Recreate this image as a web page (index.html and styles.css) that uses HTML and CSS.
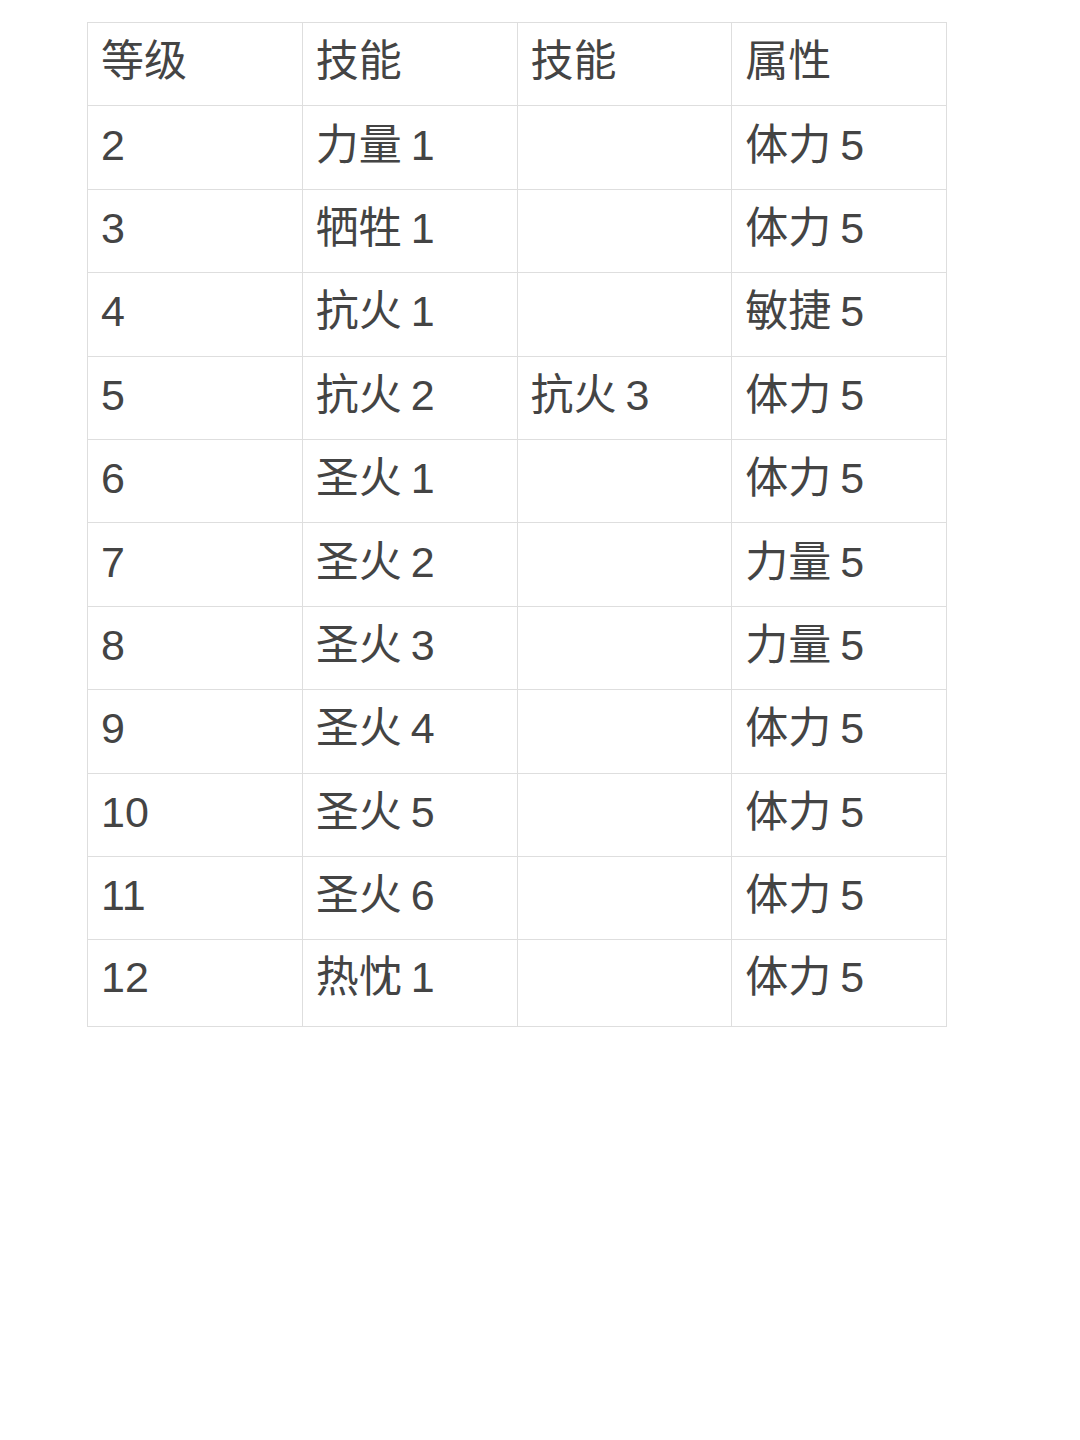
FILE: index.html
```html
<!DOCTYPE html>
<html lang="zh-CN">
<head>
<meta charset="utf-8">
<link rel="stylesheet" href="styles.css">
</head>
<body>
<table class="grid">
  <tr><td>等级</td><td>技能</td><td>技能</td><td>属性</td></tr>
  <tr><td>2</td><td>力量 1</td><td></td><td>体力 5</td></tr>
  <tr><td>3</td><td>牺牲 1</td><td></td><td>体力 5</td></tr>
  <tr><td>4</td><td>抗火 1</td><td></td><td>敏捷 5</td></tr>
  <tr><td>5</td><td>抗火 2</td><td>抗火 3</td><td>体力 5</td></tr>
  <tr><td>6</td><td>圣火 1</td><td></td><td>体力 5</td></tr>
  <tr><td>7</td><td>圣火 2</td><td></td><td>力量 5</td></tr>
  <tr><td>8</td><td>圣火 3</td><td></td><td>力量 5</td></tr>
  <tr><td>9</td><td>圣火 4</td><td></td><td>体力 5</td></tr>
  <tr><td>10</td><td>圣火 5</td><td></td><td>体力 5</td></tr>
  <tr><td>11</td><td>圣火 6</td><td></td><td>体力 5</td></tr>
  <tr class="last"><td>12</td><td>热忱 1</td><td></td><td>体力 5</td></tr>
</table>
</body>
</html>
```

FILE: styles.css
```css
html, body {
  margin: 0;
  padding: 0;
  background: #ffffff;
}
body {
  width: 1080px;
  height: 1440px;
  font-family: "Liberation Sans", "Noto Sans CJK SC", sans-serif;
  color: #444444;
}
.grid {
  border-collapse: collapse;
  margin: 22px 0 0 87px;
  width: 860px;
  table-layout: fixed;
}
.grid td {
  width: 25%;
  height: 83.4px;
  padding: 0 0 5px 13px;
  border: 1px solid #dedede;
  font-size: 43px;
  line-height: 1;
  word-spacing: -3px;
  vertical-align: middle;
  box-sizing: border-box;
  white-space: nowrap;
}
.grid tr.last td {
  height: 87px;
  padding-bottom: 11px;
}
```
